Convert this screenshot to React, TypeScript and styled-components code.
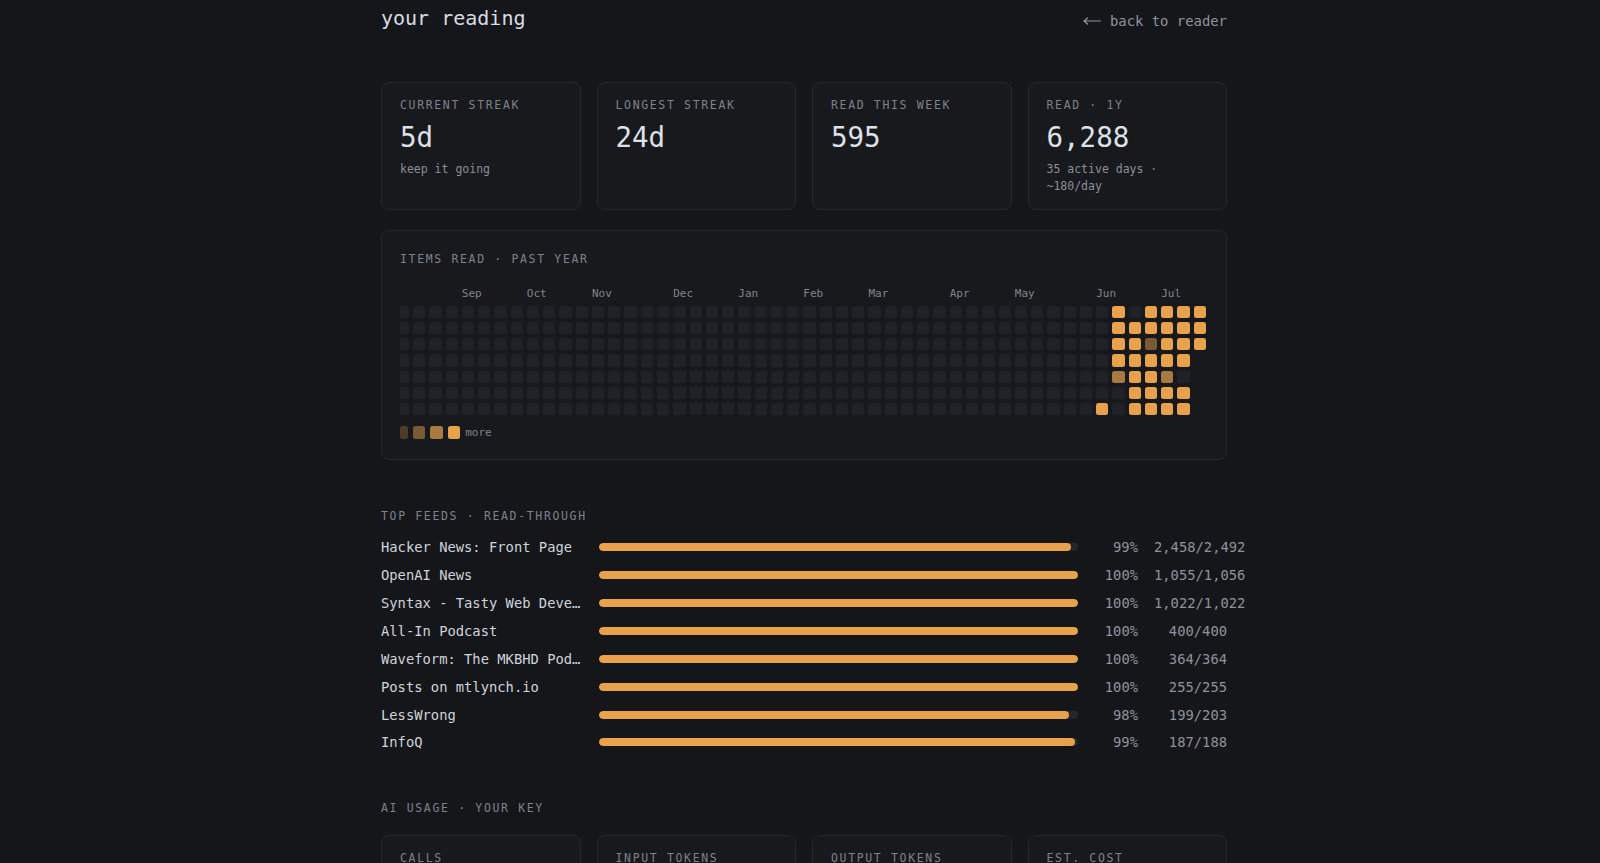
import React from 'react'
import styled, { createGlobalStyle } from 'styled-components'

const GlobalStyle = createGlobalStyle`
  html, body {
    margin: 0;
    background: #15161a;
  }
  body {
    font-family: "DejaVu Sans Mono", "Liberation Mono", monospace;
    color: #d6d9df;
  }
`

const CELL = 12.27
const WEEKS = 53

const Page = styled.div`
  max-width: 854px;
  margin: 0 auto;
  padding: 6px 0 48px 8px;
  box-sizing: border-box;
`

const Header = styled.header`
  display: flex;
  justify-content: space-between;
  align-items: baseline;
  margin-bottom: 51px;
`

const Title = styled.h1`
  margin: 0;
  font-size: 20px;
  line-height: 24px;
  font-weight: 400;
  color: #d8dbe1;
`

const BackLink = styled.a`
  display: inline-flex;
  align-items: center;
  gap: 9px;
  font-size: 13.9px;
  line-height: 20px;
  color: #8f939c;
  text-decoration: none;
`

const ArrowIcon = styled.svg`
  width: 18px;
  height: 8px;
  margin-top: 1px;
`

const StatGrid = styled.div`
  display: grid;
  grid-template-columns: repeat(4, 1fr);
  gap: 16px;
`

const Card = styled.div`
  background: #17191d;
  border: 1px solid #25272c;
  border-radius: 8px;
`

const StatCard = styled(Card)`
  padding: 15px 18px 14px;
  min-height: 97px;
`

const Label = styled.div`
  font-size: 11.5px;
  line-height: 14px;
  letter-spacing: 1.65px;
  text-transform: uppercase;
  color: #7e828c;
`

const StatValue = styled.div`
  margin-top: 9px;
  font-size: 27.5px;
  line-height: 33px;
  color: #dde0e6;
`

const StatSub = styled.div`
  margin-top: 7px;
  font-size: 11.5px;
  line-height: 17px;
  color: #8b8f98;
`

const HeatCard = styled(Card)`
  margin-top: 20px;
  padding: 21px 20px 20px 18px;
`

const HeatLabel = styled(Label)`
  margin-bottom: 21px;
`

const HeatScroll = styled.div`
  display: flex;
  flex-direction: column;
  align-items: flex-end;
  gap: 5px;
  overflow: hidden;
`

const MonthRow = styled.div`
  display: grid;
  grid-template-columns: repeat(${WEEKS}, ${CELL}px);
  column-gap: 4px;
  height: 14px;
`

const Month = styled.span`
  font-size: 11px;
  line-height: 14px;
  color: #80848d;
  white-space: nowrap;
`

const HeatGrid = styled.div`
  display: grid;
  grid-template-rows: repeat(7, ${CELL}px);
  grid-auto-flow: column;
  grid-auto-columns: ${CELL}px;
  gap: 4px;
`

const levelColors = ['#202227', '#4e3c2a', '#7a5a35', '#a67a40', '#e9a24c']

const Cell = styled.div<{ $level: number | null }>`
  border-radius: 2.5px;
  background: ${(p) => (p.$level === null ? 'transparent' : levelColors[p.$level])};
`

const Legend = styled.div`
  display: flex;
  align-items: center;
  gap: 5px;
  margin-top: 11px;
`

const LegendCell = styled.div<{ $level: number; $narrow?: boolean }>`
  width: ${(p) => (p.$narrow ? '7.7px' : '12.5px')};
  height: 13px;
  border-radius: 2.5px;
  background: ${(p) => levelColors[p.$level]};
`

const LegendText = styled.span`
  font-size: 11px;
  line-height: 13px;
  color: #80848d;
`

const Section = styled.section<{ $top: number }>`
  margin-top: ${(p) => p.$top}px;
`

const SectionLabel = styled(Label)<{ $gap: number }>`
  margin-bottom: ${(p) => p.$gap}px;
`

const FeedList = styled.div`
  display: flex;
  flex-direction: column;
  gap: 7.86px;
`

const FeedRow = styled.div`
  display: grid;
  grid-template-columns: 202px 1fr 44px 73px;
  column-gap: 16px;
  align-items: center;
  height: 20px;
  font-size: 13.8px;
  line-height: 20px;
`

const FeedName = styled.span`
  color: #cfd3da;
  white-space: nowrap;
  overflow: hidden;
  text-overflow: ellipsis;
`

const Track = styled.div`
  height: 8px;
  border-radius: 4px;
  background: #25272b;
  overflow: hidden;
`

const Fill = styled.div`
  height: 100%;
  border-radius: 4px;
  background: #e9a24c;
`

const Num = styled.span`
  color: #8e929b;
  text-align: right;
  white-space: nowrap;
`

const stats = [
  { label: 'current streak', value: '5d', sub: 'keep it going' },
  { label: 'longest streak', value: '24d' },
  { label: 'read this week', value: '595' },
  { label: 'read · 1y', value: '6,288', sub: '35 active days · ~180/day' },
]

const usage = [
  { label: 'calls', value: '—' },
  { label: 'input tokens', value: '—' },
  { label: 'output tokens', value: '—' },
  { label: 'est. cost', value: '—' },
]

// week columns are counted from the oldest one; the last 7 hold this summer's streak
const months: [string, number][] = [
  ['Sep', 7], ['Oct', 11], ['Nov', 15], ['Dec', 20], ['Jan', 24], ['Feb', 28],
  ['Mar', 32], ['Apr', 37], ['May', 41], ['Jun', 46], ['Jul', 50],
]

const recent: (number | null)[][] = [
  [0, 0, 0, 0, 0, 0, 4],
  [4, 4, 4, 4, 3, 0, 0],
  [0, 4, 4, 4, 4, 4, 4],
  [4, 4, 2, 4, 4, 4, 4],
  [4, 4, 4, 4, 3, 4, 4],
  [4, 4, 4, 4, 0, 4, 4],
  [4, 4, 4, null, null, null, null],
]

const weeks: (number | null)[][] = Array.from({ length: WEEKS }, (_, i) => {
  const r = i - (WEEKS - recent.length)
  return r >= 0 ? recent[r] : [0, 0, 0, 0, 0, 0, 0]
})

const feeds = [
  { name: 'Hacker News: Front Page', read: '2,458', total: '2,492', pct: 99, ratio: 0.9864 },
  { name: 'OpenAI News', read: '1,055', total: '1,056', pct: 100, ratio: 0.999 },
  { name: 'Syntax - Tasty Web Development Treats', read: '1,022', total: '1,022', pct: 100, ratio: 1 },
  { name: 'All-In Podcast', read: '400', total: '400', pct: 100, ratio: 1 },
  { name: 'Waveform: The MKBHD Podcast', read: '364', total: '364', pct: 100, ratio: 1 },
  { name: 'Posts on mtlynch.io', read: '255', total: '255', pct: 100, ratio: 1 },
  { name: 'LessWrong', read: '199', total: '203', pct: 98, ratio: 0.9803 },
  { name: 'InfoQ', read: '187', total: '188', pct: 99, ratio: 0.9947 },
]

const App: React.FC = () => {
  return (
    <>
      <GlobalStyle />
      <Page>
        <Header>
          <Title>your reading</Title>
          <BackLink href="#">
            <ArrowIcon viewBox="0 0 18 8" fill="none" stroke="currentColor" strokeWidth="1.2" strokeLinecap="round">
              <path d="M1 4H17.5M1 4L4.5 1M1 4L4.5 7" />
            </ArrowIcon>
            back to reader
          </BackLink>
        </Header>

        <StatGrid>
          {stats.map((s) => (
            <StatCard key={s.label}>
              <Label>{s.label}</Label>
              <StatValue>{s.value}</StatValue>
              {s.sub && <StatSub>{s.sub}</StatSub>}
            </StatCard>
          ))}
        </StatGrid>

        <HeatCard>
          <HeatLabel>items read · past year</HeatLabel>
          <HeatScroll>
            <MonthRow>
              {months.map(([m, col]) => (
                <Month key={m} style={{ gridColumn: `${col + 1} / span 1` }}>{m}</Month>
              ))}
            </MonthRow>
            <HeatGrid>
              {weeks.map((week, w) =>
                week.map((level, d) => <Cell key={`${w}-${d}`} $level={level} />)
              )}
            </HeatGrid>
          </HeatScroll>
          <Legend>
            <LegendCell $level={1} $narrow />
            <LegendCell $level={2} />
            <LegendCell $level={3} />
            <LegendCell $level={4} />
            <LegendText>more</LegendText>
          </Legend>
        </HeatCard>

        <Section $top={49}>
          <SectionLabel $gap={14}>top feeds · read-through</SectionLabel>
          <FeedList>
            {feeds.map((f) => (
              <FeedRow key={f.name}>
                <FeedName>{f.name}</FeedName>
                <Track>
                  <Fill style={{ width: `${f.ratio * 100}%` }} />
                </Track>
                <Num>{f.pct}%</Num>
                <Num>{f.read}/{f.total}</Num>
              </FeedRow>
            ))}
          </FeedList>
        </Section>

        <Section $top={49}>
          <SectionLabel $gap={20}>ai usage · your key</SectionLabel>
          <StatGrid>
            {usage.map((u) => (
              <StatCard key={u.label}>
                <Label>{u.label}</Label>
                <StatValue>{u.value}</StatValue>
              </StatCard>
            ))}
          </StatGrid>
        </Section>
      </Page>
    </>
  )
}

export default App
